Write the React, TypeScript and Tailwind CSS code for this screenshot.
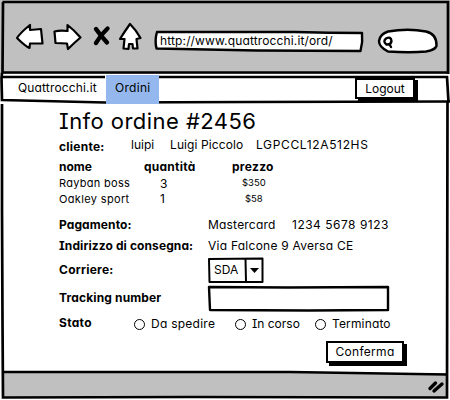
import React from "react";

type BoxProps = { className?: string; children?: React.ReactNode };

const Bold = ({ className = "", children }: BoxProps) => (
  <span className={`block shrink-0 text-[12px] leading-4 font-bold ${className}`}>{children}</span>
);

const Text = ({ className = "", children }: BoxProps) => (
  <span className={`block shrink-0 text-[12px] leading-4 ${className}`}>{children}</span>
);

const Stroke = ({ box, d, className = "", fill = "none", width = 2 }: { box: string; d: string; className?: string; fill?: string; width?: number }) => (
  <svg viewBox={box} className={`shrink-0 overflow-visible ${className}`} fill={fill} stroke="#000" strokeWidth={width} strokeLinejoin="round" strokeLinecap="round">
    <path d={d} />
  </svg>
);

const Radio = ({ label, className = "", text = "" }: { label: string; className?: string; text?: string }) => (
  <label className={`flex shrink-0 items-center ${className}`}>
    <span className="mr-[6px] size-[11px] rounded-full border border-black bg-white" />
    <Text className={text}>{label}</Text>
  </label>
);

export default function App() {
  return (
    <div className="relative flex h-[400px] w-[450px] flex-col overflow-hidden whitespace-nowrap bg-white font-['Inter','Noto_Sans',sans-serif] text-black [font-feature-settings:'cv11','cv08','calt'_0]">
      <header className="flex h-[74px] items-start bg-[#c0c0c0]">
        <Stroke box="0 0 28 26" className="mt-[24px] ml-[16px] h-[26px] w-[28px]" fill="#fff" width={2.2} d="M1 14 C5 8 9 5 14 1 L14 6 L25 5 L26.5 19.5 L14 19.5 L13.5 24 C9 22 5 18 1 14Z" />
        <Stroke box="0 0 30 26" className="mt-[24px] ml-[9px] h-[26px] w-[30px]" fill="#fff" width={2.2} d="M1.5 7.5 Q7 6 14.5 7 L14.5 1 Q21 6 27.5 13.5 Q21 19 15 25 L14 19.5 L2.5 19 Z" />
        <Stroke box="0 0 18 20" className="mt-[25px] ml-[10px] h-[20px] w-[18px]" width={4.4} d="M3 4 Q8 11 14 17.500 M14.500 3.500 Q7.500 10 3 18" />
        <Stroke box="0 0 24 28" className="mt-[23px] ml-[8px] h-[28px] w-[24px]" fill="#fff" width={2.2} d="M1 16 Q6 8 11 1 Q17 7 21.5 15 L17.5 16 L18.5 25.5 L14 25.5 L13.5 21 L10 21 L9.5 26 L4.5 25.5 L5.5 16Z" />
        <div className="relative mt-[31px] ml-[12px] flex h-[20px] w-[208px] shrink-0 items-center">
          <Stroke box="0 0 208 20" className="absolute inset-0 h-[20px] w-[208px]" fill="#fff" width={2.4} d="M2 1 L140 1 Q175 2 207 2 Q208 11 205.5 20 Q100 20 1.5 17.5 Q-0.5 9 2 1Z" />
          <Text className="relative ml-[5px] -mt-px tracking-[0.14px]">http://www.quattrocchi.it/ord/</Text>
        </div>
        <Stroke box="0 0 60 24" className="mt-[29px] ml-[15px] h-[24px] w-[60px]" fill="#fff" width={2.4} d="M10 2.500 Q30 -1 48 2.500 Q59 5 58.500 17 Q57 21 48 22.500 Q32 24 10 22.500 Q1 18 1 12 Q2 5 10 2.500Z M8 9.500 Q13 7 13.500 12 Q13 16 8.500 15.500 Q4.500 12.500 8 9.500Z M11.500 15.500 L13 18" />
      </header>

      <nav className="flex h-[30px] items-start bg-white">
        <Text className="mt-[6px] ml-[18px] w-[88px] tracking-[0.15px]">Quattrocchi.it</Text>
        <div className="relative z-10 mt-px h-[29px] w-[53px] bg-[#94b8ee] pt-[5px] pl-[9px]">
          <Text className="tracking-[0.3px]">Ordini</Text>
        </div>
        <div className="relative z-10 mt-[4px] ml-[196px] flex h-[21px] w-[60px] items-center justify-center border-2 border-black bg-white shadow-[3px_2px_0_#000]">
          <Text>Logout</Text>
        </div>
      </nav>

      <main className="h-[269px] bg-white pt-[5px] pl-[59px]">
        <h1 className="text-[22px] leading-6 font-normal tracking-[0.45px]">Info ordine #2456</h1>
        <div className="mt-1 flex h-[22px]">
          <Bold className="mt-[2px] w-[72px] tracking-[0.25px]">cliente:</Bold>
          <Text className="w-[39px]">luipi</Text>
          <Text className="w-[86px] tracking-[0.1px]">Luigi Piccolo</Text>
          <Text className="tracking-[0.65px]">LGPCCL12A512HS</Text>
        </div>
        <div className="flex h-[17px]">
          <Bold className="w-[85px]">nome</Bold>
          <Bold className="w-[88px] tracking-[0.25px]">quantità</Bold>
          <Bold className="tracking-[0.3px]">prezzo</Bold>
        </div>
        <div className="flex h-[15px]">
          <Text className="w-[101px] text-[11px]! leading-[15px]! tracking-[0.3px]">Rayban boss</Text>
          <Text className="w-[82px]">3</Text>
          <Text className="text-[9.500px]! leading-[14px]!">$350</Text>
        </div>
        <div className="flex h-[26px]">
          <Text className="w-[101px] text-[11px]! tracking-[0.35px]">Oakley sport</Text>
          <Text className="w-[85px]">1</Text>
          <Text className="text-[9.500px]! leading-4">$58</Text>
        </div>
        <div className="flex h-5">
          <Bold className="w-[149px] tracking-[0.1px]">Pagamento:</Bold>
          <Text className="w-[84px] tracking-[0.2px]">Mastercard</Text>
          <Text className="tracking-[0.5px]">1234 5678 9123</Text>
        </div>
        <div className="flex h-5 pt-px">
          <Bold className="w-[149px] tracking-[0.1px]">Indirizzo di consegna:</Bold>
          <Text className="tracking-[0.25px]">Via Falcone 9 Aversa CE</Text>
        </div>
        <div className="flex h-[28px] pt-px">
          <Bold className="mt-[4px] w-[149px] tracking-[0.25px]">Corriere:</Bold>
          <div className="relative flex h-[25px] w-[56px] items-center">
            <Stroke box="0 0 56 25" className="absolute inset-0 h-[25px] w-[56px]" fill="#fff" d="M1 1 L54.500 0.500 L54.500 24 L1.500 24 Z M37.500 1 L38 24" />
            <Text className="relative -mt-[2px] ml-[6px] w-[36px]">SDA</Text>
            <svg viewBox="0 0 9 5" className="relative h-[5px] w-[9px]"><path d="M0 0H9L4.500 5Z" /></svg>
          </div>
        </div>
        <div className="flex h-[29px]">
          <Bold className="mt-[5px] w-[149px] tracking-[0.15px]">Tracking number</Bold>
          <Stroke box="0 0 181 25" className="mt-px h-[25px] w-[181px]" fill="#fff" width={2.4} d="M1 1 L80 1.500 L180 1 L180 24 L100 24.500 L2 24 Z" />
        </div>
        <div className="flex h-[27px]">
          <Bold className="mt-px w-[75px] tracking-[0.3px]">Stato</Bold>
          <Radio label="Da spedire" className="mt-px h-[18px] w-[101px]" text="tracking-[0.25px]" />
          <Radio label="In corso" className="mt-px h-[18px] w-[80px]" />
          <Radio label="Terminato" className="mt-px h-[18px]" text="tracking-[0.15px]" />
        </div>
        <button className="ml-[267px] flex h-[22px] w-[78px] items-center justify-center border-2 border-black bg-white shadow-[3px_3px_0_#000]">
          <Text className="tracking-[0.3px]">Conferma</Text>
        </button>
      </main>

      <footer className="mx-[2px] mb-[2px] flex flex-1 items-center justify-end bg-[#c0c0c0]">
        <Stroke box="0 0 16 14" className="mr-[4px] h-[14px] w-[16px]" width={3.4} d="M2 9.500 L7.500 4 M6 12 L14 5" />
      </footer>

      <svg viewBox="0 0 450 400" className="pointer-events-none absolute inset-0 h-[400px] w-[450px]" fill="none" stroke="#000" strokeWidth="2.700">
        <path d="M2.500 2 L448 2 L448 74 M3 2 L2.500 72.500 L448 72.500" />
        <path d="M2 73 L1.500 78 L2 100 L105 102.500 L250 102 L450 101.500 M2 77 L105 77 M159 77 L447 77 L448.500 102" />
        <path d="M2 104 L2 210 L2.500 320 L3 397.500 L190 397 L447 397.500 L447.500 102 M3 372 L290 372 L447 374.500" />
      </svg>
    </div>
  );
}
